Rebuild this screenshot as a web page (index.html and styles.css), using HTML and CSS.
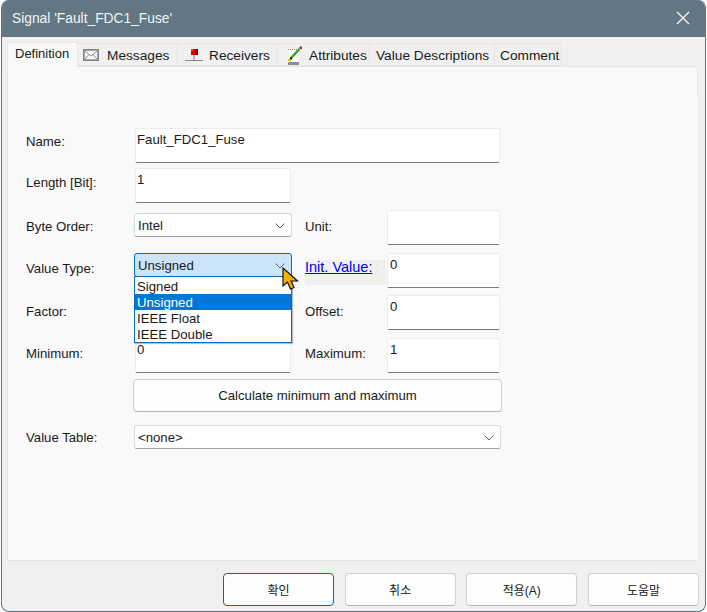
FILE: index.html
```html
<!DOCTYPE html>
<html lang="en">
<head>
<meta charset="utf-8">
<title>Signal</title>
<link rel="stylesheet" href="styles.css">
</head>
<body>
<div class="window">
  <header class="titlebar">
    <span class="title">Signal 'Fault_FDC1_Fuse'</span>
    <svg class="close" width="14" height="14" viewBox="0 0 14 14"><path d="M1 1 13 13M13 1 1 13" stroke="#fff" stroke-width="1.1" fill="none"/></svg>
  </header>
  <nav class="tabs">
    <div class="tab active">Definition</div>
    <div class="tab tab-msg">
      <svg width="16" height="12" viewBox="0 0 16 12"><rect x="0.5" y="0.5" width="15" height="11" fill="#f4f4f4" stroke="#808080"/><rect x="1.5" y="1.5" width="13" height="9" fill="none" stroke="#a8a8a8"/><path d="M2 2 8 7 14 2M2 10 6 5.500M14 10 10 5.500" fill="none" stroke="#8c8c8c"/></svg>
      <span>Messages</span>
    </div>
    <div class="tab tab-rec">
      <svg width="18" height="14" viewBox="0 0 18 14"><path d="M0 12.500H18" stroke="#8a8a8a"/><path d="M9 7V12" stroke="#8a8a8a"/><rect x="6" y="1" width="7" height="6" fill="#e00000"/><rect x="10" y="1" width="3" height="6" fill="#800000"/><rect x="6" y="1" width="2" height="2" fill="#ff4040"/></svg>
      <span>Receivers</span>
    </div>
    <div class="tab tab-attr">
      <svg width="16" height="20" viewBox="0 0 16 20"><rect x="1.500" y="3" width="10" height="13" fill="#fff"/><path d="M1 3.500H11" stroke="#888" stroke-dasharray="1 1"/><rect x="1" y="16" width="11" height="3" fill="#909090"/><path d="M4 12 12.500 3" stroke="#2f9e2f" stroke-width="2.400"/><path d="M3 14 4.500 11.500" stroke="#111" stroke-width="2"/><rect x="12.500" y="0.500" width="2.500" height="2.500" fill="#e01010"/><rect x="1" y="13" width="3" height="2" fill="#e0c000"/></svg>
      <span>Attributes</span>
    </div>
    <div class="tab tab-val">Value Descriptions</div>
    <div class="tab tab-com">Comment</div>
  </nav>
  <main class="panel">
    <form class="form">
      <label class="lbl lbl-name">Name:</label>
      <div class="input input-name">Fault_FDC1_Fuse</div>

      <label class="lbl lbl-len">Length [Bit]:</label>
      <div class="input input-len">1</div>

      <label class="lbl lbl-sel col1">Byte Order:</label>
      <div class="select select-short">
        <span>Intel</span>
        <svg class="chev" width="10" height="6" viewBox="0 0 10 6"><path d="M0.500 0.500 5 5 9.500 0.500" fill="none" stroke="#606060"/></svg>
      </div>
      <label class="lbl lbl-sel lbl-right">Unit:</label>
      <div class="input input-r input-unit"></div>

      <label class="lbl lbl-up col1">Value Type:</label>
      <div class="select select-short select-open">
        <span>Unsigned</span>
        <svg class="chev" width="10" height="6" viewBox="0 0 10 6"><path d="M0.500 0.500 5 5 9.500 0.500" fill="none" stroke="#606060"/></svg>
        <ul class="dropdown">
          <li>Signed</li>
          <li class="selected">Unsigned</li>
          <li>IEEE Float</li>
          <li>IEEE Double</li>
        </ul>
      </div>
      <div class="link-wrap"><a class="link" href="#">Init. Value:</a></div>
      <div class="input input-r input-init">0</div>

      <label class="lbl lbl-sel col1">Factor:</label>
      <div class="input input-len"></div>
      <label class="lbl lbl-sel lbl-right">Offset:</label>
      <div class="input input-r">0</div>

      <label class="lbl lbl-up col1">Minimum:</label>
      <div class="input input-len">0</div>
      <label class="lbl lbl-up lbl-right">Maximum:</label>
      <div class="input input-r">1</div>

      <button type="button" class="btn btn-calc">Calculate minimum and maximum</button>

      <label class="lbl lbl-table col1">Value Table:</label>
      <div class="select select-long">
        <span>&lt;none&gt;</span>
        <svg class="chev" width="10" height="6" viewBox="0 0 10 6"><path d="M0.500 0.500 5 5 9.500 0.500" fill="none" stroke="#606060"/></svg>
      </div>
    </form>
  </main>
  <footer class="footer">
    <button type="button" class="btn btn-foot btn-default">확인</button>
    <button type="button" class="btn btn-foot">취소</button>
    <button type="button" class="btn btn-foot">적용(A)</button>
    <button type="button" class="btn btn-foot">도움말</button>
  </footer>
  <svg class="cursor" width="18" height="24" viewBox="0 0 18 24"><path d="M1 1V19L5.500 15 8.500 22 12 20.500 9 14H15.500Z" fill="#f7b200" stroke="#111" stroke-width="1.200" stroke-linejoin="miter"/></svg>
</div>
</body>
</html>
```

FILE: styles.css
```css
* { box-sizing: border-box; }
html, body { margin: 0; padding: 0; }
body {
  width: 707px;
  height: 612px;
  background: #fff;
  overflow: hidden;
  font-family: "Liberation Sans", "Noto Sans CJK KR", sans-serif;
  font-size: 13.2px;
  color: #1a1a1a;
}
.window {
  position: relative;
  margin-left: 1px;
  width: 705px;
  height: 612px;
  background: #f0f0f0;
  border: 1px solid #61747f;
  border-top: 0;
  border-radius: 8px;
  overflow: hidden;
  display: flex;
  flex-direction: column;
}
.titlebar {
  height: 37px;
  flex: none;
  background: #627783;
  color: #f2f5f6;
  display: flex;
  align-items: center;
  justify-content: space-between;
  padding: 0 15px 1px 10px;
  font-size: 13.8px;
}
.close { display: block; }
.tabs {
  height: 29px;
  flex: none;
  display: flex;
  align-items: flex-end;
  padding-left: 5px;
  background: #f0f0f0;
  position: relative;
  z-index: 1;
  font-size: 13.7px;
}
.tab {
  height: 23px;
  flex: none;
  display: flex;
  align-items: center;
  border: 1px solid #e6e6e6;
  border-left: 0;
  background: #f0f0f0;
  white-space: nowrap;
  padding-top: 1px;
}
.tab.active {
  height: 25px;
  width: 71px;
  font-size: 13px;
  background: #f9f9f9;
  border-left: 1px solid #e6e6e6;
  border-bottom: 1px solid #f9f9f9;
  margin-bottom: -1px;
  padding: 0 0 3px 7px;
}
.tab-msg { width: 100px; padding-left: 5px; gap: 8px; }
.tab-rec { width: 100px; padding-left: 7px; gap: 6px; }
.tab-attr { width: 92px; padding-left: 9px; gap: 6px; }
.tab-attr svg { margin-top: 1px; }
.tab-val { width: 125px; padding-left: 6px; }
.tab-com { width: 67px; padding-left: 5px; }
.panel {
  position: relative;
  height: 495px;
  flex: none;
  margin: 0 7px 0 5px;
  background: #f9f9f9;
  border: 1px solid #e4e4e4;
  border-right-color: #f9f9f9;
  padding: 61px 0 0 18px;
}
.panel::after {
  content: "";
  position: absolute;
  top: 0;
  right: -1px;
  width: 1px;
  height: 29px;
  background: #e4e4e4;
}
.form {
  display: grid;
  grid-template-columns: 108px 157px 95px 113px;
  grid-template-rows: 40px 42px 43px 42px 43px 41px 46px 24px;
  align-items: start;
}
.col1 { grid-column: 1; }
.lbl { padding-top: 6px; line-height: 16px; }
.lbl-len { padding-top: 7px; grid-column: 1; }
.lbl-sel { padding-top: 9px; }
.lbl-up { padding-top: 8px; }
.lbl-right { padding-left: 14px; }
.lbl-table { padding-top: 5px; }
.input {
  background: #fff;
  border: 1px solid #ececec;
  border-bottom: 1px solid #7a7a7a;
  border-radius: 2px;
  margin-left: 1px;
  padding: 3px 0 0 1px;
  line-height: 15px;
  height: 35px;
}
.input-name { grid-column: 2 / span 3; width: 365px; }
.input-len { width: 156px; }
.select {
  position: relative;
  background: #fff;
  border: 1px solid #d9d9d9;
  border-bottom-color: #a0a0a0;
  border-radius: 3px;
  height: 24px;
  display: flex;
  align-items: center;
  justify-content: space-between;
  padding: 1px 6px 0 3px;
}
.select-short { margin-top: 3px; width: 158px; }
.select-open {
  margin-top: 0;
  background: #cce4f7;
  border-color: #0a6cbd;
  z-index: 2;
}
.select-long { grid-column: 2 / span 3; width: 367px; }
.chev { flex: none; }
.input-r { width: 113px; padding-left: 2px; }
.dropdown {
  position: absolute;
  left: -1px;
  top: 22px;
  width: 158px;
  margin: 0;
  padding: 1px 0 0;
  list-style: none;
  background: #fff;
  border: 1px solid #0a6cbd;
  box-shadow: 1px 1px 1px rgba(0,0,0,.25);
  height: 67px;
}
.dropdown li { height: 16px; line-height: 17px; padding-left: 2px; }
.dropdown .selected { background: #0078d7; color: #fff; }
.link-wrap {
  margin: 7px 0 0 14px;
  height: 25px;
  background: #f0f0f0;
  line-height: 15px;
  font-size: 14.5px;
}
.link { color: #0000ee; }
.btn {
  font: inherit;
  color: inherit;
  background: #fdfdfd;
  border: 1px solid #d0d0d0;
  border-bottom-color: #b4b4b4;
  border-radius: 4px;
  padding: 0;
}
.btn-calc {
  grid-column: 2 / span 3;
  width: 369px;
  height: 33px;
  margin-left: -1px;
}
.footer {
  flex: 1;
  display: flex;
  gap: 10.67px;
  padding: 12px 0 0 221px;
}
.btn-foot { width: 111px; height: 33px; font-size: 12px; }
.btn-default { border: 1px solid #0067c0; }
.cursor { position: absolute; left: 280px; top: 267px; z-index: 3; }
```
